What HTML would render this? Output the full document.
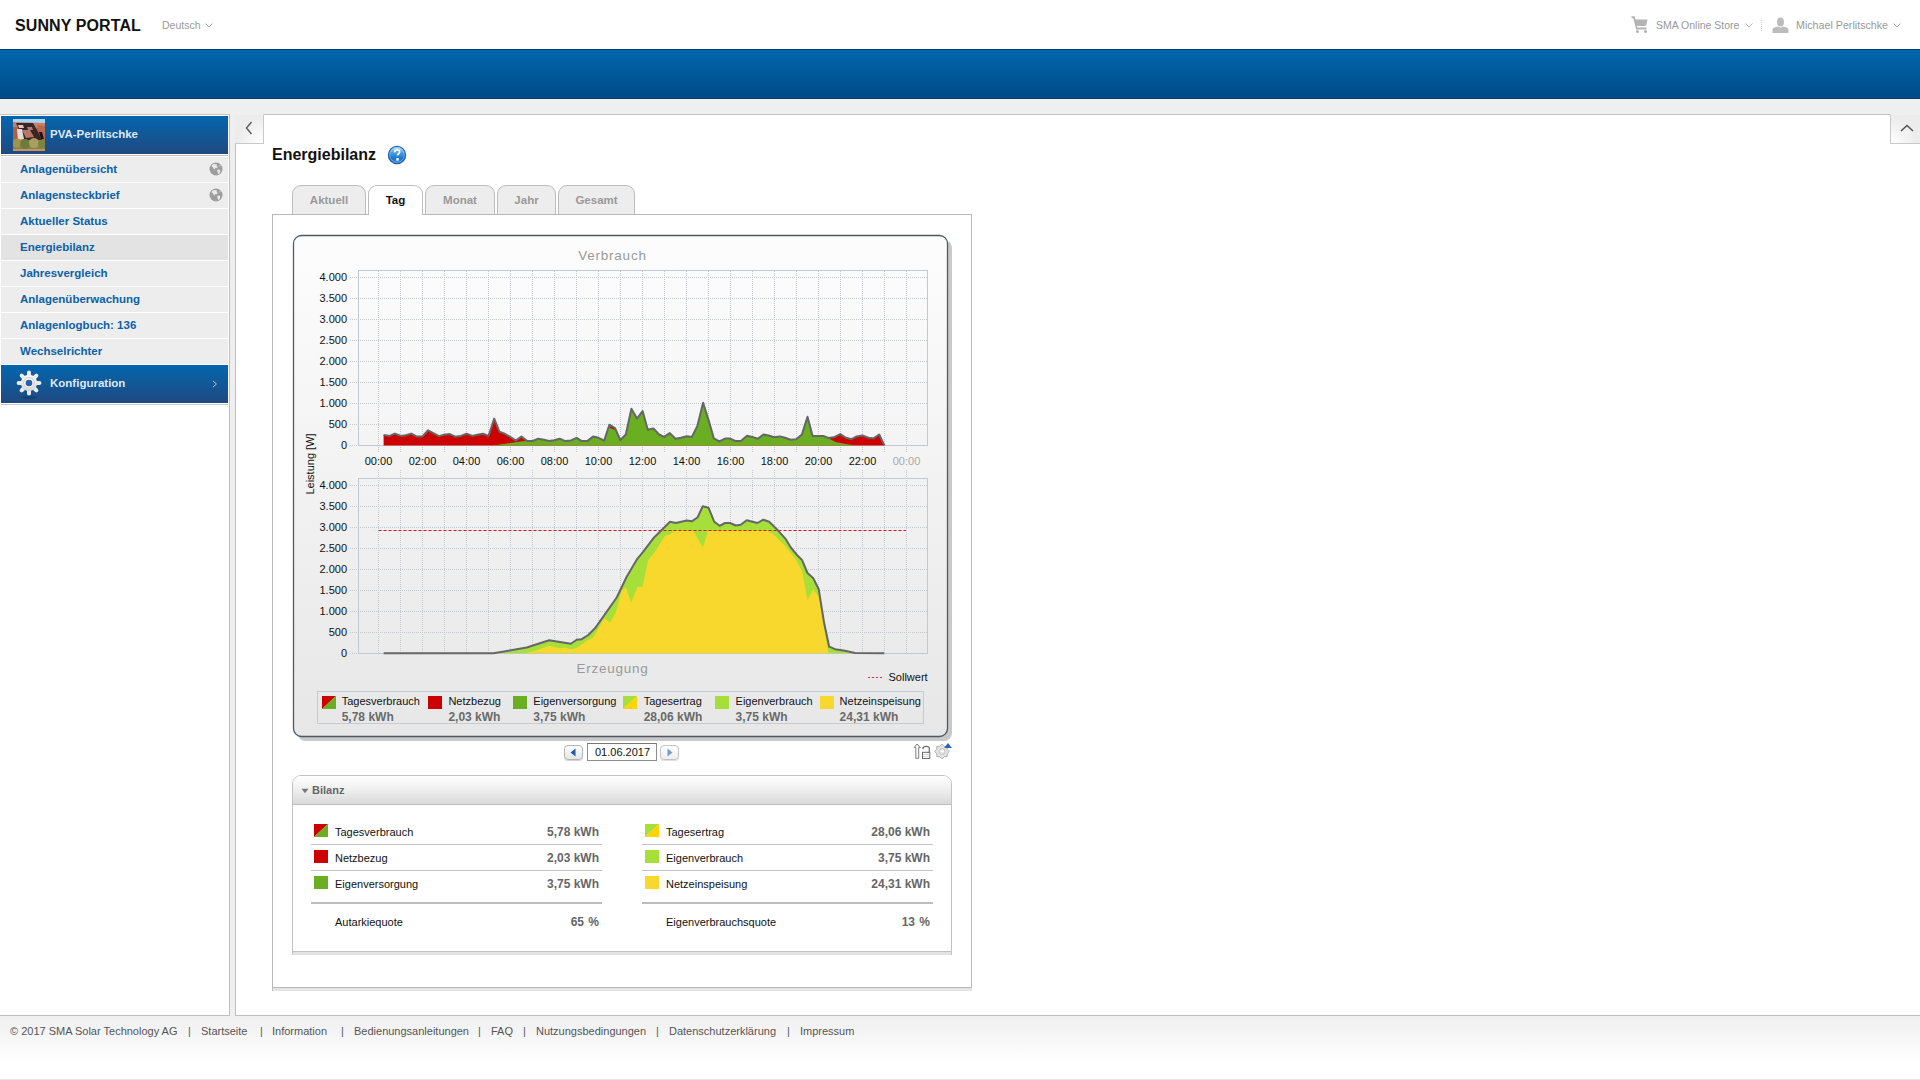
<!DOCTYPE html>
<html><head><meta charset="utf-8">
<style>
*{margin:0;padding:0;box-sizing:border-box}
html,body{width:1920px;height:1080px;overflow:hidden;background:#fff;font-family:"Liberation Sans",sans-serif;}
.a{position:absolute;white-space:nowrap}
#hdr{position:absolute;left:0;top:0;width:1920px;height:49px;background:#fff}
#band{position:absolute;left:0;top:49px;width:1920px;height:50px;background:linear-gradient(#0067ae,#004a86);border-top:1px solid #003f74;border-bottom:1px solid #003d6e}
#gbg{position:absolute;left:0;top:99px;width:1920px;height:916px;background:#efefef}
#side{position:absolute;left:0;top:114px;width:230px;height:901px;background:#fff;border-top:1px solid #c4c4c4;border-right:1px solid #bfbfbf}
#side>div:not(.a){left:1px!important;width:227px!important}
.mi{left:1px!important;width:227px!important}
#cont{position:absolute;left:235px;top:114px;width:1685px;height:901px;background:#fff;border-left:1px solid #bfbfbf;border-top:1px solid #c4c4c4}
.mi{position:absolute;left:1px;width:227px;height:25px;background:#ededed;font-size:11.5px;font-weight:bold;color:#0b62a8;padding-left:19px;line-height:25px}
#foot{position:absolute;left:0;top:1015px;width:1920px;height:65px;border-top:1px solid #bfbfbf;background:linear-gradient(#efefef,#fff 45px);font-size:11px;color:#555}
</style></head><body>
<div id="hdr">
  <div class="a" style="left:15px;top:17px;font-size:16px;font-weight:bold;color:#111;letter-spacing:0.1px">SUNNY PORTAL</div>
  <div class="a" style="left:162px;top:19px;font-size:10.5px;color:#9a9a9a">Deutsch</div>
  <svg class="a" style="left:205px;top:23px" width="8" height="5" viewBox="0 0 8 5"><polyline points="0.5,0.5 4,4 7.5,0.5" fill="none" stroke="#b0b0b0" stroke-width="1"/></svg>
  <svg class="a" style="left:1631px;top:16px" width="18" height="18" viewBox="0 0 18 18"><path d="M0.5 1.2 H3 L5.8 12.5 H15.5" fill="none" stroke="#b4b4b4" stroke-width="1.8"/><path d="M4 3.5 H16.5 L15.6 8 C15.3 9.5 14.5 10 13 10 H5.2 Z" fill="#b4b4b4"/><circle cx="6.5" cy="15.6" r="1.5" fill="#b4b4b4"/><circle cx="14.5" cy="15.6" r="1.5" fill="#b4b4b4"/></svg>
  <div class="a" style="left:1656px;top:19px;font-size:10.5px;color:#999">SMA Online Store</div>
  <svg class="a" style="left:1745px;top:23px" width="8" height="5" viewBox="0 0 8 5"><polyline points="0.5,0.5 4,4 7.5,0.5" fill="none" stroke="#b0b0b0" stroke-width="1"/></svg>
  <div class="a" style="left:1761px;top:20px;width:1px;height:11px;border-left:1px dotted #cfcfcf"></div>
  <svg class="a" style="left:1772px;top:17px" width="17" height="16" viewBox="0 0 17 16"><ellipse cx="8.5" cy="5" rx="3.5" ry="4.6" fill="#bcbcbc"/><path d="M0.5 16 V13 C0.5 11 3 10.2 6 9.6 L8.5 10.8 L11 9.6 C14 10.2 16.5 11 16.5 13 V16Z" fill="#bcbcbc"/></svg>
  <div class="a" style="left:1796px;top:19px;font-size:10.7px;color:#999">Michael Perlitschke</div>
  <svg class="a" style="left:1893px;top:23px" width="8" height="5" viewBox="0 0 8 5"><polyline points="0.5,0.5 4,4 7.5,0.5" fill="none" stroke="#b0b0b0" stroke-width="1"/></svg>
</div>
<div id="band"></div>
<div id="gbg"></div>

<div id="side">
  <div style="position:absolute;left:0;top:1px;width:228px;height:38px;background:linear-gradient(#0466ae,#1f4980)"></div>
  <svg style="position:absolute;left:13px;top:4px" width="32" height="32" viewBox="0 0 32 32">
    <rect width="32" height="32" fill="#b06048"/>
    <rect width="32" height="4" fill="#a8d6f4"/>
    <polygon points="0,3 32,4 32,9 0,8" fill="#c8806a"/>
    <polygon points="3,4 20,4 30,22 12,24" fill="#3a2424"/>
    <polygon points="5,6 10,6 11,9 6,9" fill="#d8c8c0"/>
    <polygon points="14,8 19,8 20,11 15,11" fill="#a08078"/>
    <polygon points="9,11 17,11 21,18 13,19" fill="#b87868"/>
    <polygon points="4,10 9,10 11,20 5,21" fill="#e4dcd4"/>
    <polygon points="24,6 32,7 32,22 28,20" fill="#b86850"/>
    <polygon points="26,13 29,13 31,20 28,20" fill="#1c1414"/>
    <rect x="0" y="21" width="32" height="11" fill="#8a8446"/>
    <circle cx="4" cy="24" r="4.5" fill="#9c9450"/>
    <circle cx="12" cy="25" r="5" fill="#6e7a3a"/>
    <circle cx="21" cy="24" r="5" fill="#a8a060"/>
    <circle cx="29" cy="25" r="4" fill="#7c8440"/>
    <rect y="30" width="32" height="2" fill="#c89064"/>
  </svg>
  <div class="a" style="left:50px;top:13px;font-size:11.5px;font-weight:bold;color:#dfe8f2">PVA-Perlitschke</div>
  <div style="position:absolute;left:0;top:40px;width:228px;height:1px;background:#c4c0bc"></div>
  <div class="mi" style="top:42px;background:#ededed">Anlagenübersicht</div>
<svg style="position:absolute;left:209px;top:47px" width="14" height="14" viewBox="0 0 14 14"><circle cx="7" cy="7" r="6.5" fill="#9d9d9d"/><path d="M4 2.2 C5.5 1.6 7 2 8 2.6 L7.6 4 L8.8 4.8 L8 6.2 L6.4 6 L5.6 7.4 L4.4 6.6 L3.8 5 L2.4 4.4 C2.8 3.4 3.3 2.7 4 2.2Z M8.6 7.8 L10.6 7.4 L11.4 9 L10.4 11.4 L9 12 L8.8 10 L8 9Z M10.2 2.6 L11.8 4 L10.8 4.6Z" fill="#e8e8e8"/></svg>
<div class="mi" style="top:68px;background:#ededed">Anlagensteckbrief</div>
<svg style="position:absolute;left:209px;top:73px" width="14" height="14" viewBox="0 0 14 14"><circle cx="7" cy="7" r="6.5" fill="#9d9d9d"/><path d="M4 2.2 C5.5 1.6 7 2 8 2.6 L7.6 4 L8.8 4.8 L8 6.2 L6.4 6 L5.6 7.4 L4.4 6.6 L3.8 5 L2.4 4.4 C2.8 3.4 3.3 2.7 4 2.2Z M8.6 7.8 L10.6 7.4 L11.4 9 L10.4 11.4 L9 12 L8.8 10 L8 9Z M10.2 2.6 L11.8 4 L10.8 4.6Z" fill="#e8e8e8"/></svg>
<div class="mi" style="top:94px;background:#ededed">Aktueller Status</div>
<div class="mi" style="top:120px;background:#e3e3e3">Energiebilanz</div>
<div class="mi" style="top:146px;background:#ededed">Jahresvergleich</div>
<div class="mi" style="top:172px;background:#ededed">Anlagenüberwachung</div>
<div class="mi" style="top:198px;background:#ededed">Anlagenlogbuch: 136</div>
<div class="mi" style="top:224px;background:#ededed">Wechselrichter</div>

  <div style="position:absolute;left:0;top:250px;width:228px;height:38px;background:linear-gradient(#0466ae,#1f4980)"></div>
  <svg style="position:absolute;left:15px;top:254px" width="28" height="30" viewBox="0 0 28 30">
    <defs><radialGradient id="gg" cx="50%" cy="40%" r="60%"><stop offset="0" stop-color="#ffffff"/><stop offset="0.7" stop-color="#eeeeee"/><stop offset="1" stop-color="#c8c8c8"/></radialGradient></defs>
    <ellipse cx="14" cy="28.5" rx="8" ry="1.3" fill="#0f2f58" opacity="0.45"/>
    <g stroke="#ececec" stroke-width="4" stroke-linecap="round"><line x1="14.00" y1="8.00" x2="14.00" y2="3.60"/><line x1="18.24" y1="9.76" x2="21.35" y2="6.65"/><line x1="20.00" y1="14.00" x2="24.40" y2="14.00"/><line x1="18.24" y1="18.24" x2="21.35" y2="21.35"/><line x1="14.00" y1="20.00" x2="14.00" y2="24.40"/><line x1="9.76" y1="18.24" x2="6.65" y2="21.35"/><line x1="8.00" y1="14.00" x2="3.60" y2="14.00"/><line x1="9.76" y1="9.76" x2="6.65" y2="6.65"/></g>
    <circle cx="14" cy="14" r="8.2" fill="url(#gg)"/>
    <circle cx="14" cy="14" r="5.4" fill="none" stroke="#d0d0d0" stroke-width="1.1"/>
    <circle cx="14" cy="14" r="3.3" fill="#2662a2"/>
  </svg>
  <div class="a" style="left:50px;top:262px;font-size:11.5px;font-weight:bold;color:#dfe8f2">Konfiguration</div>
  <svg style="position:absolute;left:212px;top:265px" width="6" height="8" viewBox="0 0 6 8"><polyline points="1,1 4.5,4 1,7" fill="none" stroke="#b8c8dc" stroke-width="1"/></svg>
  <div style="position:absolute;left:0;top:289px;width:228px;height:1px;background:#c8c8c8"></div>
</div>

<div id="cont">
  <div style="position:absolute;left:-1px;top:-1px;width:29px;height:30px;background:radial-gradient(circle at 100% 100%,#ffffff 0,#f6f6f6 12px,#ececec 26px);border-right:1px solid #c9c9c9;border-bottom:1px solid #c9c9c9;border-top:1px solid #efefef"></div>
  <svg class="a" style="left:9px;top:6px" width="8" height="14" viewBox="0 0 8 14"><polyline points="6.5,1 1.5,7 6.5,13" fill="none" stroke="#5a5a5a" stroke-width="1.4"/></svg>
  <div style="position:absolute;left:1654px;top:-1px;width:31px;height:30px;background:radial-gradient(circle at 0% 100%,#ffffff 0,#f6f6f6 12px,#ececec 26px);border-left:1px solid #c9c9c9;border-bottom:1px solid #c9c9c9;border-top:1px solid #efefef"></div>
  <svg class="a" style="left:1664px;top:9px" width="14" height="8" viewBox="0 0 14 8"><polyline points="1,7 7,1.5 13,7" fill="none" stroke="#555" stroke-width="1.6"/></svg>
</div>
<div class="a" style="left:272px;top:146px;font-size:16px;font-weight:bold;color:#111">Energiebilanz</div>
<svg class="a" style="left:387px;top:145px" width="20" height="20" viewBox="0 0 20 20">
  <defs><linearGradient id="hg" x1="0" y1="0" x2="0" y2="1"><stop offset="0" stop-color="#d8f6ff"/><stop offset="0.35" stop-color="#4aa2e6"/><stop offset="0.7" stop-color="#1a74cc"/><stop offset="1" stop-color="#3f8ed8"/></linearGradient></defs>
  <ellipse cx="10" cy="11" rx="9" ry="9" fill="#000" opacity="0.06"/>
  <circle cx="10" cy="10" r="8.6" fill="url(#hg)" stroke="#1e5fb4" stroke-width="1.2"/>
  <circle cx="10" cy="10" r="7.3" fill="none" stroke="#9fd4f6" stroke-width="0.6" opacity="0.7"/>
  <path d="M7.7 7.4 C7.7 5.7 8.8 4.9 10.2 4.9 C11.7 4.9 12.6 5.8 12.6 7 C12.6 8.6 10.6 8.8 10.6 10.6" fill="none" stroke="#333" stroke-width="1.9" opacity="0.35" transform="translate(0,0.4)"/>
  <path d="M7.7 7.4 C7.7 5.7 8.8 4.9 10.2 4.9 C11.7 4.9 12.6 5.8 12.6 7 C12.6 8.6 10.6 8.8 10.6 10.6" fill="none" stroke="#fff" stroke-width="1.8"/>
  <rect x="9.3" y="13" width="2.4" height="2.6" fill="#fff"/>
</svg>
<div class="a" style="left:292px;top:185px;width:74px;height:30px;background:#ededed;border:1px solid #bdbdbd;border-bottom:1px solid #bdbdbd;border-radius:9px 9px 0 0;font-size:11.5px;font-weight:bold;color:#999;text-align:center;line-height:29px">Aktuell</div>
<div class="a" style="left:368px;top:185px;width:55px;height:30px;background:#fff;border:1px solid #bdbdbd;border-bottom:none;border-radius:9px 9px 0 0;font-size:11.5px;font-weight:bold;color:#111;text-align:center;line-height:29px">Tag</div>
<div class="a" style="left:425px;top:185px;width:70px;height:30px;background:#ededed;border:1px solid #bdbdbd;border-bottom:1px solid #bdbdbd;border-radius:9px 9px 0 0;font-size:11.5px;font-weight:bold;color:#999;text-align:center;line-height:29px">Monat</div>
<div class="a" style="left:497px;top:185px;width:59px;height:30px;background:#ededed;border:1px solid #bdbdbd;border-bottom:1px solid #bdbdbd;border-radius:9px 9px 0 0;font-size:11.5px;font-weight:bold;color:#999;text-align:center;line-height:29px">Jahr</div>
<div class="a" style="left:558px;top:185px;width:77px;height:30px;background:#ededed;border:1px solid #bdbdbd;border-bottom:1px solid #bdbdbd;border-radius:9px 9px 0 0;font-size:11.5px;font-weight:bold;color:#999;text-align:center;line-height:29px">Gesamt</div>

<div style="position:absolute;left:272px;top:214px;width:700px;height:774px;border:1px solid #b8b8b8;background:#fff;box-shadow:0 3px 0 #e4e4e4"></div>
<div class="a" style="left:272px;top:987px;width:1px;height:4px;background:#bcbcbc"></div>
<div style="position:absolute;left:369px;top:214px;width:53px;height:2px;background:#fff"></div>
<!--CHART--><svg class="a" style="left:290px;top:230px" width="670" height="520" viewBox="290 230 670 520" shape-rendering="auto">
<defs><linearGradient id="cbg" x1="0" y1="0" x2="0" y2="1"><stop offset="0" stop-color="#fdfdfd"/><stop offset="1" stop-color="#e7e7e7"/></linearGradient></defs>
<rect x="297.5" y="240" width="654.5" height="501" rx="8" fill="#c9c9c9"/>
<rect x="293.5" y="235.5" width="654" height="501" rx="8" fill="url(#cbg)" stroke="#4d5a66" stroke-width="1.3"/>
<g stroke="#c3c9cf" stroke-width="1" stroke-dasharray="1 1" shape-rendering="crispEdges"><line x1="350" y1="445.5" x2="927" y2="445.5"/><line x1="350" y1="424.5" x2="927" y2="424.5"/><line x1="350" y1="403.5" x2="927" y2="403.5"/><line x1="350" y1="382.5" x2="927" y2="382.5"/><line x1="350" y1="361.5" x2="927" y2="361.5"/><line x1="350" y1="340.5" x2="927" y2="340.5"/><line x1="350" y1="319.5" x2="927" y2="319.5"/><line x1="350" y1="298.5" x2="927" y2="298.5"/><line x1="350" y1="277.5" x2="927" y2="277.5"/><line x1="350" y1="653.5" x2="927" y2="653.5"/><line x1="350" y1="632.5" x2="927" y2="632.5"/><line x1="350" y1="611.5" x2="927" y2="611.5"/><line x1="350" y1="590.5" x2="927" y2="590.5"/><line x1="350" y1="569.5" x2="927" y2="569.5"/><line x1="350" y1="548.5" x2="927" y2="548.5"/><line x1="350" y1="527.5" x2="927" y2="527.5"/><line x1="350" y1="506.5" x2="927" y2="506.5"/><line x1="350" y1="485.5" x2="927" y2="485.5"/><line x1="378.5" y1="270.5" x2="378.5" y2="453"/><line x1="378.5" y1="470" x2="378.5" y2="653"/><line x1="400.5" y1="270.5" x2="400.5" y2="453"/><line x1="400.5" y1="470" x2="400.5" y2="653"/><line x1="422.5" y1="270.5" x2="422.5" y2="453"/><line x1="422.5" y1="470" x2="422.5" y2="653"/><line x1="444.5" y1="270.5" x2="444.5" y2="453"/><line x1="444.5" y1="470" x2="444.5" y2="653"/><line x1="466.5" y1="270.5" x2="466.5" y2="453"/><line x1="466.5" y1="470" x2="466.5" y2="653"/><line x1="488.5" y1="270.5" x2="488.5" y2="453"/><line x1="488.5" y1="470" x2="488.5" y2="653"/><line x1="510.5" y1="270.5" x2="510.5" y2="453"/><line x1="510.5" y1="470" x2="510.5" y2="653"/><line x1="532.5" y1="270.5" x2="532.5" y2="453"/><line x1="532.5" y1="470" x2="532.5" y2="653"/><line x1="554.5" y1="270.5" x2="554.5" y2="453"/><line x1="554.5" y1="470" x2="554.5" y2="653"/><line x1="576.5" y1="270.5" x2="576.5" y2="453"/><line x1="576.5" y1="470" x2="576.5" y2="653"/><line x1="598.5" y1="270.5" x2="598.5" y2="453"/><line x1="598.5" y1="470" x2="598.5" y2="653"/><line x1="620.5" y1="270.5" x2="620.5" y2="453"/><line x1="620.5" y1="470" x2="620.5" y2="653"/><line x1="642.5" y1="270.5" x2="642.5" y2="453"/><line x1="642.5" y1="470" x2="642.5" y2="653"/><line x1="664.5" y1="270.5" x2="664.5" y2="453"/><line x1="664.5" y1="470" x2="664.5" y2="653"/><line x1="686.5" y1="270.5" x2="686.5" y2="453"/><line x1="686.5" y1="470" x2="686.5" y2="653"/><line x1="708.5" y1="270.5" x2="708.5" y2="453"/><line x1="708.5" y1="470" x2="708.5" y2="653"/><line x1="730.5" y1="270.5" x2="730.5" y2="453"/><line x1="730.5" y1="470" x2="730.5" y2="653"/><line x1="752.5" y1="270.5" x2="752.5" y2="453"/><line x1="752.5" y1="470" x2="752.5" y2="653"/><line x1="774.5" y1="270.5" x2="774.5" y2="453"/><line x1="774.5" y1="470" x2="774.5" y2="653"/><line x1="796.5" y1="270.5" x2="796.5" y2="453"/><line x1="796.5" y1="470" x2="796.5" y2="653"/><line x1="818.5" y1="270.5" x2="818.5" y2="453"/><line x1="818.5" y1="470" x2="818.5" y2="653"/><line x1="840.5" y1="270.5" x2="840.5" y2="453"/><line x1="840.5" y1="470" x2="840.5" y2="653"/><line x1="862.5" y1="270.5" x2="862.5" y2="453"/><line x1="862.5" y1="470" x2="862.5" y2="653"/><line x1="884.5" y1="270.5" x2="884.5" y2="453"/><line x1="884.5" y1="470" x2="884.5" y2="653"/><line x1="906.5" y1="270.5" x2="906.5" y2="453"/><line x1="906.5" y1="470" x2="906.5" y2="653"/></g>
<g fill="none" stroke="#c2c9d0" stroke-width="1" shape-rendering="crispEdges"><rect x="358.5" y="270.5" width="569" height="175"/><rect x="358.5" y="478.5" width="569" height="175"/></g>
<polygon points="383.6,445.5 383.6,435.0 389.7,435.9 394.8,433.6 400.9,435.9 405.6,435.3 411.2,433.6 416.9,436.6 422.5,436.4 428.1,430.3 438.9,436.1 444.1,434.8 449.7,434.1 455.3,436.7 460.9,435.9 466.6,433.8 472.2,435.9 477.3,434.8 483.0,433.8 488.6,435.9 494.2,418.6 499.4,431.7 504.5,433.6 510.2,436.9 515.8,440.6 521.4,436.6 527.0,440.9 532.7,440.9 538.3,438.7 543.9,439.7 548.9,440.9 554.1,440.2 559.7,438.8 565.3,441.1 570.9,440.4 576.6,437.8 581.7,441.1 587.3,441.1 593.0,436.6 598.6,437.8 604.2,440.6 609.4,424.7 615.0,428.0 620.2,440.2 625.8,434.5 631.4,408.8 637.0,418.6 642.6,411.1 647.8,429.8 653.4,428.4 659.1,434.5 664.2,436.9 669.8,433.1 675.5,438.8 681.1,437.8 686.7,436.2 691.9,436.9 697.5,425.6 703.1,402.7 708.8,420.9 713.8,438.3 719.4,441.4 725.0,438.6 730.2,438.6 735.8,441.1 740.9,440.9 747.0,435.8 752.2,436.9 757.8,438.8 763.4,434.5 768.6,435.5 774.2,437.3 779.8,436.4 785.0,437.8 790.6,439.7 796.2,439.2 801.9,434.5 807.5,416.7 812.6,436.1 818.3,436.1 823.9,436.1 829.1,438.1 834.7,436.9 840.3,434.1 845.9,437.8 851.6,439.2 856.7,436.4 862.3,435.5 868.4,437.8 873.6,438.3 879.2,434.5 884.4,445.5 " fill="#cc0000"/>
<polygon points="493.8,445.5 510.6,443.0 520.0,441.4 527.0,440.9 532.7,440.9 538.3,438.7 543.9,439.7 548.9,440.9 554.1,440.2 559.7,438.8 565.3,441.1 570.9,440.4 576.6,437.8 581.7,441.1 587.3,441.1 593.0,436.6 598.6,437.8 604.2,440.6 609.4,424.7 615.0,428.0 620.2,440.2 625.8,434.5 631.4,408.8 637.0,418.6 642.6,411.1 647.8,429.8 653.4,428.4 659.1,434.5 664.2,436.9 669.8,433.1 675.5,438.8 681.1,437.8 686.7,436.2 691.9,436.9 697.5,425.6 703.1,402.7 708.8,420.9 713.8,438.3 719.4,441.4 725.0,438.6 730.2,438.6 735.8,441.1 740.9,440.9 747.0,435.8 752.2,436.9 757.8,438.8 763.4,434.5 768.6,435.5 774.2,437.3 779.8,436.4 785.0,437.8 790.6,439.7 796.2,439.2 801.9,434.5 807.5,416.7 812.6,436.1 818.3,436.1 823.9,436.1 826.2,437.3 835.6,442.0 845.9,443.9 856.2,445.5" fill="#6aae22"/>
<polygon points="608.6,427 609.4,424.7 615,428 614.5,430" fill="#cc0000"/>
<polyline points="383.6,435.0 389.7,435.9 394.8,433.6 400.9,435.9 405.6,435.3 411.2,433.6 416.9,436.6 422.5,436.4 428.1,430.3 438.9,436.1 444.1,434.8 449.7,434.1 455.3,436.7 460.9,435.9 466.6,433.8 472.2,435.9 477.3,434.8 483.0,433.8 488.6,435.9 494.2,418.6 499.4,431.7 504.5,433.6 510.2,436.9 515.8,440.6 521.4,436.6 527.0,440.9 532.7,440.9 538.3,438.7 543.9,439.7 548.9,440.9 554.1,440.2 559.7,438.8 565.3,441.1 570.9,440.4 576.6,437.8 581.7,441.1 587.3,441.1 593.0,436.6 598.6,437.8 604.2,440.6 609.4,424.7 615.0,428.0 620.2,440.2 625.8,434.5 631.4,408.8 637.0,418.6 642.6,411.1 647.8,429.8 653.4,428.4 659.1,434.5 664.2,436.9 669.8,433.1 675.5,438.8 681.1,437.8 686.7,436.2 691.9,436.9 697.5,425.6 703.1,402.7 708.8,420.9 713.8,438.3 719.4,441.4 725.0,438.6 730.2,438.6 735.8,441.1 740.9,440.9 747.0,435.8 752.2,436.9 757.8,438.8 763.4,434.5 768.6,435.5 774.2,437.3 779.8,436.4 785.0,437.8 790.6,439.7 796.2,439.2 801.9,434.5 807.5,416.7 812.6,436.1 818.3,436.1 823.9,436.1 829.1,438.1 834.7,436.9 840.3,434.1 845.9,437.8 851.6,439.2 856.7,436.4 862.3,435.5 868.4,437.8 873.6,438.3 879.2,434.5 884.4,445.5" fill="none" stroke="#666" stroke-width="2" stroke-linejoin="round"/>
<polygon points="383.6,653.3 493.3,653.3 526.7,647.5 549.2,640.3 570.8,643.8 576.7,639.7 581.7,639.2 588.3,635.0 595.0,628.3 603.3,616.7 616.7,597.5 626.7,576.7 636.7,559.7 643.3,551.7 653.3,538.3 661.7,530.0 670.0,521.7 675.8,523.0 686.7,520.5 691.7,521.3 697.5,517.5 702.8,506.2 708.5,507.7 714.2,521.7 719.7,525.8 725.0,523.0 730.0,523.0 735.8,525.5 740.8,524.7 746.7,520.3 757.5,523.0 763.3,519.7 769.2,521.7 778.3,530.8 785.8,539.2 790.8,547.5 796.7,554.7 802.0,560.0 807.5,573.0 813.3,578.3 818.7,589.2 824.2,623.3 829.2,646.7 835.0,649.2 845.0,650.8 855.0,653.0 884.2,653.3 884.2,653.3" fill="#a7df3a"/>
<polygon points="525.0,653.3 535.0,650.8 549.2,645.8 560.0,648.3 565.0,647.5 570.8,649.2 576.7,648.0 586.7,640.8 593.3,637.5 604.2,618.3 610.0,622.5 615.8,612.5 621.7,590.8 625.8,587.5 631.3,602.5 637.5,586.7 642.5,586.7 648.3,560.0 655.0,551.7 665.0,535.8 670.0,534.2 675.0,530.8 693.3,530.8 702.8,547.5 708.3,530.8 766.7,530.8 773.3,534.2 785.8,546.7 795.0,558.3 802.0,570.8 807.5,600.0 813.3,589.2 818.7,596.7 823.3,623.3 828.3,653.3" fill="#f8d82c"/>
<line x1="378.5" y1="530.5" x2="906" y2="530.5" stroke="#dd1122" stroke-width="1" stroke-dasharray="3 2"/>
<polyline points="383.6,653.3 493.3,653.3 526.7,647.5 549.2,640.3 570.8,643.8 576.7,639.7 581.7,639.2 588.3,635.0 595.0,628.3 603.3,616.7 616.7,597.5 626.7,576.7 636.7,559.7 643.3,551.7 653.3,538.3 661.7,530.0 670.0,521.7 675.8,523.0 686.7,520.5 691.7,521.3 697.5,517.5 702.8,506.2 708.5,507.7 714.2,521.7 719.7,525.8 725.0,523.0 730.0,523.0 735.8,525.5 740.8,524.7 746.7,520.3 757.5,523.0 763.3,519.7 769.2,521.7 778.3,530.8 785.8,539.2 790.8,547.5 796.7,554.7 802.0,560.0 807.5,573.0 813.3,578.3 818.7,589.2 824.2,623.3 829.2,646.7 835.0,649.2 845.0,650.8 855.0,653.0 884.2,653.3" fill="none" stroke="#666" stroke-width="2" stroke-linejoin="round"/>
<g font-family="Liberation Sans" font-size="11" fill="#111"><text x="347" y="448.7" text-anchor="end">0</text><text x="347" y="427.7" text-anchor="end">500</text><text x="347" y="406.7" text-anchor="end">1.000</text><text x="347" y="385.7" text-anchor="end">1.500</text><text x="347" y="364.7" text-anchor="end">2.000</text><text x="347" y="343.7" text-anchor="end">2.500</text><text x="347" y="322.7" text-anchor="end">3.000</text><text x="347" y="301.7" text-anchor="end">3.500</text><text x="347" y="280.7" text-anchor="end">4.000</text><text x="347" y="656.5" text-anchor="end">0</text><text x="347" y="635.5" text-anchor="end">500</text><text x="347" y="614.5" text-anchor="end">1.000</text><text x="347" y="593.5" text-anchor="end">1.500</text><text x="347" y="572.5" text-anchor="end">2.000</text><text x="347" y="551.5" text-anchor="end">2.500</text><text x="347" y="530.5" text-anchor="end">3.000</text><text x="347" y="509.5" text-anchor="end">3.500</text><text x="347" y="488.5" text-anchor="end">4.000</text><text x="378.5" y="465" text-anchor="middle">00:00</text><text x="422.5" y="465" text-anchor="middle">02:00</text><text x="466.5" y="465" text-anchor="middle">04:00</text><text x="510.5" y="465" text-anchor="middle">06:00</text><text x="554.5" y="465" text-anchor="middle">08:00</text><text x="598.5" y="465" text-anchor="middle">10:00</text><text x="642.5" y="465" text-anchor="middle">12:00</text><text x="686.5" y="465" text-anchor="middle">14:00</text><text x="730.5" y="465" text-anchor="middle">16:00</text><text x="774.5" y="465" text-anchor="middle">18:00</text><text x="818.5" y="465" text-anchor="middle">20:00</text><text x="862.5" y="465" text-anchor="middle">22:00</text><text x="906.5" y="465" text-anchor="middle" fill="#aaa">00:00</text></g>
<text x="0" y="0" transform="translate(314,464) rotate(-90)" text-anchor="middle" font-family="Liberation Sans" font-size="11" fill="#111">Leistung [W]</text>
<text x="612.5" y="260" text-anchor="middle" font-family="Liberation Sans" font-size="13.5" fill="#999" letter-spacing="0.75">Verbrauch</text>
<text x="612.5" y="672.5" text-anchor="middle" font-family="Liberation Sans" font-size="13.5" fill="#999" letter-spacing="0.75">Erzeugung</text>
<line x1="868" y1="677.5" x2="882" y2="677.5" stroke="#e03040" stroke-width="1.2" stroke-dasharray="2 2"/>
<text x="888.5" y="681" font-family="Liberation Sans" font-size="11" fill="#111">Sollwert</text>
<rect x="317.5" y="691.5" width="606" height="32" fill="none" stroke="#c4cbd2" stroke-width="1"/>
<polygon points="322,696 336,696 322,709" fill="#cc0000"/><polygon points="336,696 336,709 322,709" fill="#6aae22"/>
<text x="341.7" y="705" font-family="Liberation Sans" font-size="11" fill="#111">Tagesverbrauch</text>
<text x="341.7" y="721" font-family="Liberation Sans" font-size="12" font-weight="bold" fill="#6a6a6a">5,78 kWh</text>
<rect x="428" y="696" width="14" height="13" fill="#cc0000"/>
<text x="448.4" y="705" font-family="Liberation Sans" font-size="11" fill="#111">Netzbezug</text>
<text x="448.4" y="721" font-family="Liberation Sans" font-size="12" font-weight="bold" fill="#6a6a6a">2,03 kWh</text>
<rect x="513" y="696" width="14" height="13" fill="#6aae22"/>
<text x="533.3" y="705" font-family="Liberation Sans" font-size="11" fill="#111">Eigenversorgung</text>
<text x="533.3" y="721" font-family="Liberation Sans" font-size="12" font-weight="bold" fill="#6a6a6a">3,75 kWh</text>
<polygon points="623,696 637,696 623,709" fill="#a7df3a"/><polygon points="637,696 637,709 623,709" fill="#ffd300"/>
<text x="643.7" y="705" font-family="Liberation Sans" font-size="11" fill="#111">Tagesertrag</text>
<text x="643.7" y="721" font-family="Liberation Sans" font-size="12" font-weight="bold" fill="#6a6a6a">28,06 kWh</text>
<rect x="715" y="696" width="14" height="13" fill="#a7df3a"/>
<text x="735.6" y="705" font-family="Liberation Sans" font-size="11" fill="#111">Eigenverbrauch</text>
<text x="735.6" y="721" font-family="Liberation Sans" font-size="12" font-weight="bold" fill="#6a6a6a">3,75 kWh</text>
<rect x="820" y="696" width="14" height="13" fill="#f8d82c"/>
<text x="839.6" y="705" font-family="Liberation Sans" font-size="11" fill="#111">Netzeinspeisung</text>
<text x="839.6" y="721" font-family="Liberation Sans" font-size="12" font-weight="bold" fill="#6a6a6a">24,31 kWh</text>
</svg><!--/CHART-->
<!--NAV-->
<div class="a" style="left:564px;top:745px;width:19px;height:15px;border:1px solid #b4b4b4;border-radius:4px;background:linear-gradient(#ffffff,#e6e6e6);box-shadow:0 1px 1px #d0d0d0"></div>
<svg class="a" style="left:570px;top:748px" width="6" height="9" viewBox="0 0 6 9"><polygon points="5.5,0.5 0.5,4.5 5.5,8.5" fill="#1a5fa8"/></svg>
<div class="a" style="left:587px;top:743px;width:70px;height:18px;border:1px solid #8c8c8c;border-top-color:#777;background:#fff;font-size:11px;color:#111;line-height:16px;padding-left:7px">01.06.2017</div>
<div class="a" style="left:660px;top:745px;width:19px;height:15px;border:1px solid #c4c4c4;border-radius:4px;background:linear-gradient(#ffffff,#eeeeee);box-shadow:0 1px 1px #dcdcdc"></div>
<svg class="a" style="left:667px;top:748px" width="6" height="9" viewBox="0 0 6 9"><polygon points="0.5,0.5 5.5,4.5 0.5,8.5" fill="#6f9fd0"/></svg>
<svg class="a" style="left:912px;top:743px" width="20" height="17" viewBox="0 0 20 17"><path d="M5 1 L8.3 4.6 L6.7 4.6 L6.7 15.3 L3.8 15.3 L3.8 4.6 L2.2 4.6 Z" fill="#fbfbfb" stroke="#707070" stroke-width="0.9" stroke-linejoin="round"/><rect x="10.5" y="9.3" width="7.3" height="6.2" fill="#fff" stroke="#6a6a6a" stroke-width="1"/><line x1="11" y1="11.4" x2="17.3" y2="11.4" stroke="#c8c8c8" stroke-width="0.8"/><line x1="11" y1="13.4" x2="17.3" y2="13.4" stroke="#c8c8c8" stroke-width="0.8"/><path d="M11 5.3 C11 2.6 17.3 2.6 17.3 5.3 V9.3 M11 5.3 V6.2" fill="none" stroke="#6a6a6a" stroke-width="1.2"/></svg>
<svg class="a" style="left:934px;top:742px" width="19" height="18" viewBox="0 0 19 18"><polygon points="8.00,2.20 10.14,4.33 13.16,4.34 13.17,7.36 15.30,9.50 13.17,11.64 13.16,14.66 10.14,14.67 8.00,16.80 5.86,14.67 2.84,14.66 2.83,11.64 0.70,9.50 2.83,7.36 2.84,4.34 5.86,4.33" fill="#e6e6e6" stroke="#a4a4a4" stroke-width="0.9" stroke-linejoin="round"/><circle cx="8" cy="9.5" r="3" fill="none" stroke="#c4c4c4" stroke-width="1"/><circle cx="8.3" cy="9" r="1.4" fill="#fff"/><polygon points="10.2,6 14,1 17.9,6" fill="#1f66bf"/></svg>
<!--BILANZ-->
<div class="a" style="left:292px;top:775px;width:660px;height:177px;border:1px solid #c2c2c2;border-radius:9px 9px 0 0;background:#fff;box-shadow:0 3px 0 #e2e2e2"></div>
<div class="a" style="left:292px;top:951px;width:1px;height:4px;background:#c4c4c4"></div><div class="a" style="left:951px;top:951px;width:1px;height:4px;background:#c4c4c4"></div>
<div class="a" style="left:293px;top:776px;width:658px;height:29px;border-radius:8px 8px 0 0;background:linear-gradient(#ffffff,#f2f2f2 40%,#d9d9d9);border-bottom:1px solid #bdbdbd"></div>
<svg class="a" style="left:301px;top:788px" width="8" height="6" viewBox="0 0 8 6"><polygon points="0.5,0.8 7.5,0.8 4,5.2" fill="#777"/></svg>
<div class="a" style="left:312px;top:784px;font-size:11px;font-weight:bold;color:#666">Bilanz</div>
<svg class="a" style="left:314px;top:824px" width="14" height="13" viewBox="0 0 14 13"><polygon points="0,0 14,0 0,13" fill="#cc0000"/><polygon points="14,0 14,13 0,13" fill="#6aae22"/></svg>
<div class="a" style="left:335px;top:826px;font-size:11px;color:#111">Tagesverbrauch</div>
<div class="a" style="left:479px;width:120px;text-align:right;top:825px;font-size:12px;font-weight:bold;color:#666">5,78 kWh</div>
<div class="a" style="left:311px;top:844px;width:291px;height:1px;background:#c4c4c4"></div>
<div class="a" style="left:314px;top:850px;width:14px;height:13px;background:#cc0000"></div>
<div class="a" style="left:335px;top:852px;font-size:11px;color:#111">Netzbezug</div>
<div class="a" style="left:479px;width:120px;text-align:right;top:851px;font-size:12px;font-weight:bold;color:#666">2,03 kWh</div>
<div class="a" style="left:311px;top:870px;width:291px;height:1px;background:#c4c4c4"></div>
<div class="a" style="left:314px;top:876px;width:14px;height:13px;background:#6aae22"></div>
<div class="a" style="left:335px;top:878px;font-size:11px;color:#111">Eigenversorgung</div>
<div class="a" style="left:479px;width:120px;text-align:right;top:877px;font-size:12px;font-weight:bold;color:#666">3,75 kWh</div>
<div class="a" style="left:311px;top:902px;width:291px;height:2px;background:#bdbdbd"></div>
<div class="a" style="left:335px;top:916px;font-size:11px;color:#111">Autarkiequote</div>
<div class="a" style="left:479px;width:120px;text-align:right;top:915px;font-size:12px;font-weight:bold;color:#666;word-spacing:1px">65 %</div>
<svg class="a" style="left:645px;top:824px" width="14" height="13" viewBox="0 0 14 13"><polygon points="0,0 14,0 0,13" fill="#a7df3a"/><polygon points="14,0 14,13 0,13" fill="#ffd300"/></svg>
<div class="a" style="left:666px;top:826px;font-size:11px;color:#111">Tagesertrag</div>
<div class="a" style="left:810px;width:120px;text-align:right;top:825px;font-size:12px;font-weight:bold;color:#666">28,06 kWh</div>
<div class="a" style="left:642px;top:844px;width:291px;height:1px;background:#c4c4c4"></div>
<div class="a" style="left:645px;top:850px;width:14px;height:13px;background:#a7df3a"></div>
<div class="a" style="left:666px;top:852px;font-size:11px;color:#111">Eigenverbrauch</div>
<div class="a" style="left:810px;width:120px;text-align:right;top:851px;font-size:12px;font-weight:bold;color:#666">3,75 kWh</div>
<div class="a" style="left:642px;top:870px;width:291px;height:1px;background:#c4c4c4"></div>
<div class="a" style="left:645px;top:876px;width:14px;height:13px;background:#f8d82c"></div>
<div class="a" style="left:666px;top:878px;font-size:11px;color:#111">Netzeinspeisung</div>
<div class="a" style="left:810px;width:120px;text-align:right;top:877px;font-size:12px;font-weight:bold;color:#666">24,31 kWh</div>
<div class="a" style="left:642px;top:902px;width:291px;height:2px;background:#bdbdbd"></div>
<div class="a" style="left:666px;top:916px;font-size:11px;color:#111">Eigenverbrauchsquote</div>
<div class="a" style="left:810px;width:120px;text-align:right;top:915px;font-size:12px;font-weight:bold;color:#666;word-spacing:1px">13 %</div>

<!--FOOTER-->


<div id="foot"><div class="a" style="left:230px;top:-1px;width:5px;height:1px;background:#efefef"></div><div class="a" style="left:10px;top:9px;font-size:11px;color:#555">© 2017 SMA Solar Technology AG</div><div class="a" style="left:201px;top:9px;font-size:11px;color:#555">Startseite</div><div class="a" style="left:272px;top:9px;font-size:11px;color:#555">Information</div><div class="a" style="left:354px;top:9px;font-size:11px;color:#555">Bedienungsanleitungen</div><div class="a" style="left:491px;top:9px;font-size:11px;color:#555">FAQ</div><div class="a" style="left:536px;top:9px;font-size:11px;color:#555">Nutzungsbedingungen</div><div class="a" style="left:669px;top:9px;font-size:11px;color:#555">Datenschutzerklärung</div><div class="a" style="left:800px;top:9px;font-size:11px;color:#555">Impressum</div><div class="a" style="left:188px;top:9px;font-size:11px;color:#555">|</div><div class="a" style="left:260px;top:9px;font-size:11px;color:#555">|</div><div class="a" style="left:341px;top:9px;font-size:11px;color:#555">|</div><div class="a" style="left:478px;top:9px;font-size:11px;color:#555">|</div><div class="a" style="left:523px;top:9px;font-size:11px;color:#555">|</div><div class="a" style="left:656px;top:9px;font-size:11px;color:#555">|</div><div class="a" style="left:787px;top:9px;font-size:11px;color:#555">|</div><div class="a" style="left:0;top:63px;width:1920px;height:1px;background:#e8e8e8"></div></div>
</body></html>
